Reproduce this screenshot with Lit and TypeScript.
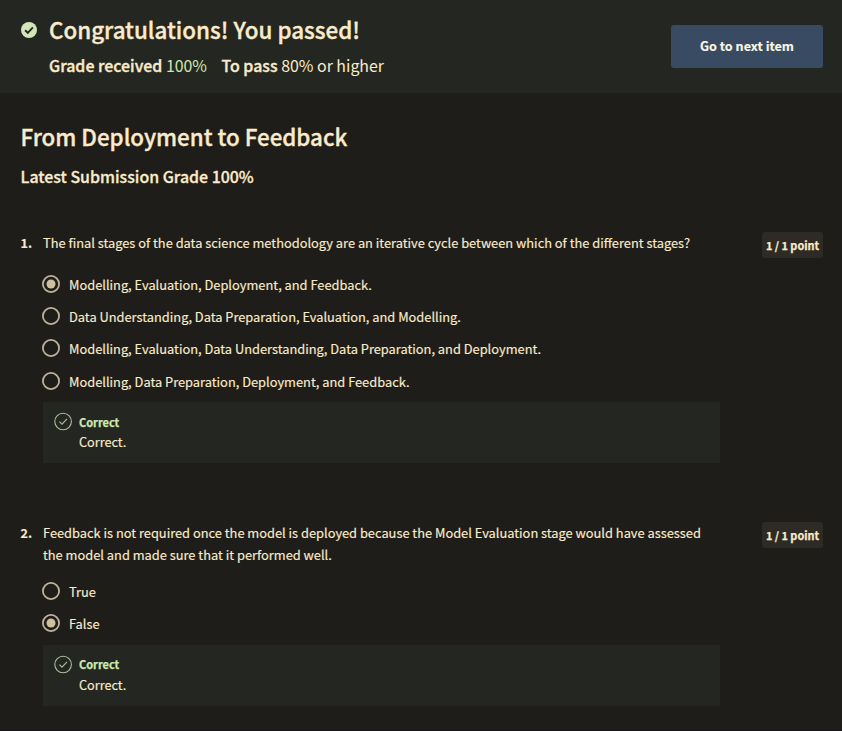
import { LitElement, html, css } from "lit";
import { customElement, property } from "lit/decorators.js";

interface Question {
  number: number;
  prompt: string;
  options: string[];
  selected: number;
  kind: string;
}

const questions: Question[] = [
  {
    number: 1,
    prompt:
      "The final stages of the data science methodology are an iterative cycle between which of the different stages?",
    options: [
      "Modelling, Evaluation, Deployment, and Feedback.",
      "Data Understanding, Data Preparation, Evaluation, and Modelling.",
      "Modelling, Evaluation, Data Understanding, Data Preparation, and Deployment.",
      "Modelling, Data Preparation, Deployment, and Feedback.",
    ],
    selected: 0,
    kind: "first",
  },
  {
    number: 2,
    prompt:
      "Feedback is not required once the model is deployed because the Model Evaluation stage would have assessed the model and made sure that it performed well.",
    options: ["True", "False"],
    selected: 1,
    kind: "second",
  },
];

@customElement("quiz-question")
export class QuizQuestion extends LitElement {
  @property({ attribute: false }) question!: Question;

  static styles = css`
    :host {
      display: block;
    }
    .row {
      display: grid;
      grid-template-columns: 22.5px 676.5px 1fr;
      align-items: start;
    }
    .number {
      font-weight: 700;
      font-size: 12.6px;
      line-height: 22px;
    }
    .prompt {
      line-height: 22px;
      padding-right: 10px;
    }
    .badge {
      justify-self: end;
      width: 61px;
      height: 26px;
      box-sizing: border-box;
      border-radius: 3px;
      background: #2e2b26;
      font-size: 10.9px;
      font-weight: 700;
      line-height: 26px;
      text-align: center;
      white-space: nowrap;
      -webkit-text-stroke: 0.25px;
    }
    .options {
      display: grid;
      margin: 0 0 0 21.5px;
      padding: 0;
      list-style: none;
    }
    .first .options {
      margin-top: 11px;
      grid-template-rows: 32px 32px 32.5px 32.5px;
    }
    .second .options {
      margin-top: 10px;
      grid-auto-rows: 32px;
    }
    .option {
      display: flex;
      align-items: center;
      gap: 9px;
    }
    .radio {
      width: 18px;
      height: 18px;
      margin-bottom: 2px;
      flex: none;
    }
    .ring {
      fill: none;
      stroke: #bfb29b;
      stroke-width: 1.8;
    }
    .dot {
      fill: #cfbf9d;
    }
    .feedback {
      display: grid;
      grid-template-columns: 18px 1fr;
      column-gap: 7px;
      width: 677px;
      height: 61px;
      box-sizing: border-box;
      margin-left: 22.5px;
      padding: 10px 11px;
      background: #242721;
      align-content: start;
    }
    .first .feedback {
      margin-top: 4px;
    }
    .second .feedback {
      margin-top: 5px;
      padding-top: 9px;
      row-gap: 1px;
    }
    .tick {
      width: 19px;
      height: 19px;
    }
    .second .tick {
      margin-top: 1px;
    }
    .outline {
      fill: none;
      stroke: #aebd9d;
      stroke-width: 1.1;
    }
    .verdict {
      color: #cfe8b0;
      font-weight: 700;
      font-size: 11px;
      line-height: 20px;
      -webkit-text-stroke: 0.25px;
    }
    .note {
      grid-column: 2;
      font-size: 12.7px;
      line-height: 20px;
    }
  `;

  render() {
    const q = this.question;
    return html`
      <section class=${q.kind}>
        <div class="row">
          <span class="number">${q.number}.</span>
          <div class="prompt">${q.prompt}</div>
          <span class="badge">1 / 1 point</span>
        </div>
        <ul class="options">
          ${q.options.map(
            (text, i) => html`
              <li class="option">
                <svg class="radio" viewBox="0 0 18 18">
                  <circle class="ring" cx="9" cy="9" r="8.1"></circle>
                  ${i === q.selected
                    ? html`<svg viewBox="0 0 18 18"><circle class="dot" cx="9" cy="9" r="4.5"></circle></svg>`
                    : null}
                </svg>
                <span>${text}</span>
              </li>
            `
          )}
        </ul>
        <div class="feedback">
          <svg class="tick" viewBox="0 0 19 19">
            <circle class="outline" cx="9.1" cy="9.5" r="8.3"></circle>
            <path class="outline" d="M5.4 9.7 8 12.2 13 6.9"></path>
          </svg>
          <div class="verdict">Correct</div>
          <div class="note">Correct.</div>
        </div>
      </section>
    `;
  }
}

@customElement("app-root")
export class AppRoot extends LitElement {
  static styles = css`
    :host {
      display: flex;
      flex-direction: column;
      height: 731px;
      box-sizing: border-box;
      overflow: hidden;
      border-bottom: 1px solid #161219;
      background: #1f1d1a;
      color: #fbebcb;
      font-family: "Noto Sans CJK SC", "Noto Sans", sans-serif;
      font-size: 12.83px;
      line-height: 20px;
      -webkit-text-stroke: 0.15px;
    }
    .banner {
      display: flex;
      justify-content: space-between;
      height: 93px;
      flex: none;
      box-sizing: border-box;
      padding: 14px 19px 0 21px;
      background: #242721;
    }
    .result {
      display: flex;
      gap: 12px;
    }
    .passed {
      width: 16px;
      height: 16px;
      margin-top: 8px;
    }
    .disc {
      fill: #d3e6b8;
    }
    .mark {
      fill: none;
      stroke: #242721;
      stroke-width: 1.9;
    }
    .heading {
      margin: 0;
      font-size: 22.38px;
      font-weight: 500;
      line-height: 31px;
      -webkit-text-stroke: 0.35px;
    }
    .grades {
      display: flex;
      gap: 14.5px;
      margin-top: 8px;
      font-size: 15.92px;
      line-height: 25px;
      white-space: pre;
      -webkit-text-stroke: 0;
    }
    .strong {
      font-weight: 500;
      -webkit-text-stroke: 0.35px;
    }
    .score {
      color: #cfe8b0;
    }
    .next {
      width: 152px;
      height: 43px;
      margin-top: 11px;
      padding: 0 0 2px;
      border: 0;
      border-radius: 3px;
      background: #384b62;
      color: #fcf6e4;
      font-family: inherit;
      font-size: 12.6px;
      font-weight: 700;
    }
    .content {
      padding: 28px 19px 0 20.5px;
    }
    .title {
      margin: 0;
      font-size: 22.34px;
      font-weight: 500;
      line-height: 31px;
      -webkit-text-stroke: 0.35px;
    }
    .latest {
      margin: 11px 0 41px;
      font-size: 15.92px;
      font-weight: 500;
      line-height: 28px;
      -webkit-text-stroke: 0.3px;
    }
    .questions {
      display: grid;
      grid-auto-rows: 290px;
    }
  `;

  render() {
    return html`
      <header class="banner">
        <div class="result">
          <svg class="passed" viewBox="0 0 16 16">
            <circle class="disc" cx="8" cy="8" r="8"></circle>
            <path class="mark" d="M4.1 8.2 6.8 10.8 11.9 5.4"></path>
          </svg>
          <div>
            <h2 class="heading">Congratulations! You passed!</h2>
            <div class="grades">
              <span><span class="strong">Grade received</span> <span class="score">100%</span></span>
              <span><span class="strong">To pass</span> 80% or higher</span>
            </div>
          </div>
        </div>
        <button class="next">Go to next item</button>
      </header>
      <main class="content">
        <h1 class="title">From Deployment to Feedback</h1>
        <h3 class="latest">Latest Submission Grade 100%</h3>
        <div class="questions">
          ${questions.map((q) => html`<quiz-question .question=${q}></quiz-question>`)}
        </div>
      </main>
    `;
  }
}
